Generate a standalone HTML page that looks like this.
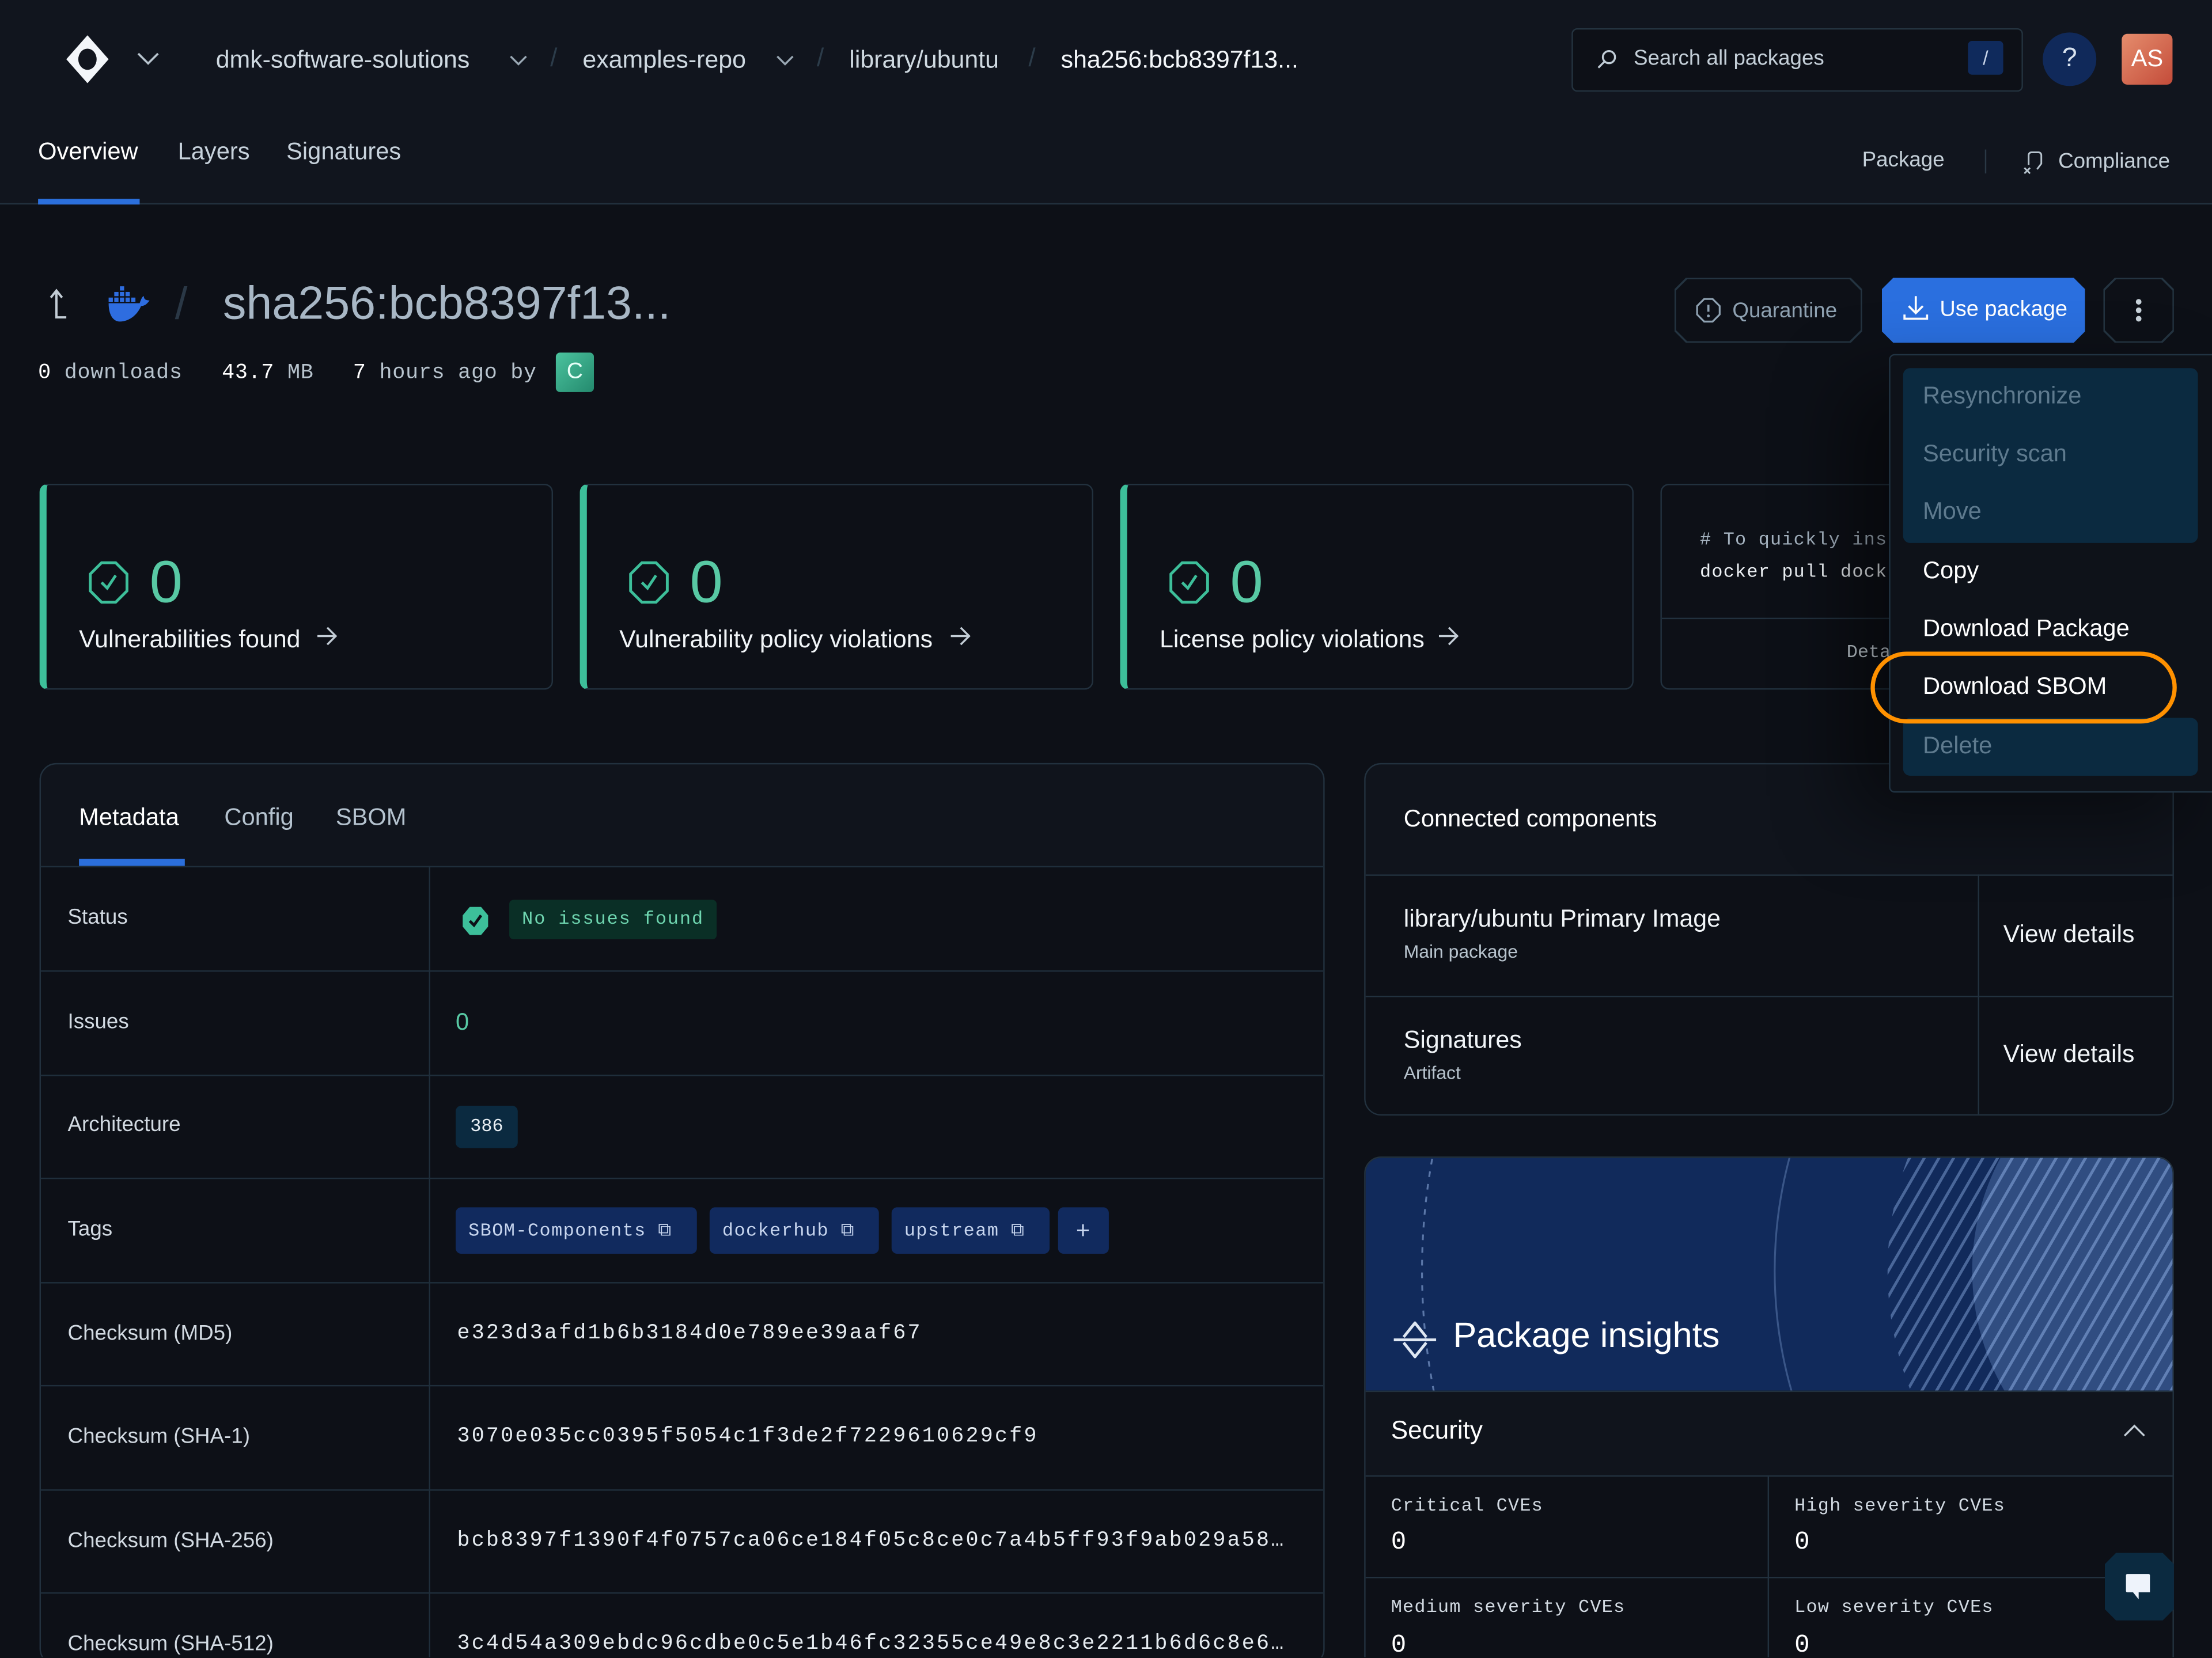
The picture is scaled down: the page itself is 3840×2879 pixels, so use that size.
<!DOCTYPE html>
<html><head><meta charset="utf-8"><style>
*{margin:0;padding:0;box-sizing:border-box}
html,body{width:3840px;height:2879px;overflow:hidden;background:#0d1017}
#w{position:absolute;left:0;top:0;width:1568px;height:1175px;transform:scale(2.449);transform-origin:0 0;font-family:"Liberation Sans",sans-serif;color:#e8edf2;background:#0d1017;overflow:hidden}
.a{position:absolute;white-space:nowrap}
.m{font-family:"Liberation Mono",monospace}
.oct{clip-path:polygon(8px 0,calc(100% - 8px) 0,100% 8px,100% calc(100% - 8px),calc(100% - 8px) 100%,8px 100%,0 calc(100% - 8px),0 8px)}
.row{position:absolute;left:0;right:0;border-top:1px solid #1f2e3b}
.lab{position:absolute;left:19px;font-size:15px;color:#d2dae2}
.val{position:absolute;left:295px;font-size:15px;letter-spacing:1.3px;color:#e6ecf1}
.tag{position:absolute;top:-16px;height:33px;background:#112a5e;border-radius:4px;color:#c8d6ef;font-size:13px;letter-spacing:.6px;line-height:33px;padding-left:9px}
</style></head><body><div id="w">
<!-- header -->
<div class="a" style="left:0;top:0;width:1568px;height:145px;background:#11151e;border-bottom:1px solid #23323f"></div>
<svg class="a" style="left:44px;top:24px" width="36" height="36" viewBox="0 0 36 36"><path d="M18 1 L33 18 L18 35 L3 18Z" fill="#f3f6fa"/><ellipse cx="18" cy="18" rx="6.5" ry="7.5" fill="#11151e"/></svg>
<svg class="a" style="left:97px;top:37px" width="16" height="10"><path d="M1 1l7 7 7-7" stroke="#b8c4ce" stroke-width="1.5" fill="none"/></svg>
<div class="a" style="left:153px;top:32px;font-size:17.5px;color:#cfd9e1">dmk-software-solutions</div>
<svg class="a" style="left:361px;top:39px" width="13" height="8"><path d="M1 1l5.5 5.5 5.5-5.5" stroke="#9aa8b4" stroke-width="1.4" fill="none"/></svg>
<div class="a" style="left:390px;top:31px;font-size:18px;color:#2c3c4a">/</div>
<div class="a" style="left:413px;top:32px;font-size:17.5px;color:#cfd9e1">examples-repo</div>
<svg class="a" style="left:550px;top:39px" width="13" height="8"><path d="M1 1l5.5 5.5 5.5-5.5" stroke="#9aa8b4" stroke-width="1.4" fill="none"/></svg>
<div class="a" style="left:579px;top:31px;font-size:18px;color:#2c3c4a">/</div>
<div class="a" style="left:602px;top:32px;font-size:17.5px;color:#cfd9e1">library/ubuntu</div>
<div class="a" style="left:729px;top:31px;font-size:18px;color:#2c3c4a">/</div>
<div class="a" style="left:752px;top:32px;font-size:17.5px;color:#f4f7fa">sha256:bcb8397f13...</div>
<div class="a" style="left:1114px;top:20px;width:320px;height:45px;border:1px solid #24333f;border-radius:4px;background:#0d1017"></div>
<svg class="a" style="left:1131px;top:34px" width="16" height="16"><circle cx="9.5" cy="6.5" r="4.3" stroke="#c0ccd6" stroke-width="1.4" fill="none"/><path d="M6.5 9.5L2 14" stroke="#c0ccd6" stroke-width="1.4"/></svg>
<div class="a" style="left:1158px;top:33px;font-size:15px;color:#c4cfd8">Search all packages</div>
<div class="a" style="left:1395px;top:29px;width:25px;height:24px;background:#0f2a5c;border-radius:3px;color:#c6d3e8;font-size:14px;text-align:center;line-height:24px">/</div>
<div class="a" style="left:1448px;top:23px;width:38px;height:38px;border-radius:50%;background:#10295a;color:#d8e2ee;font-size:19px;text-align:center;line-height:38px">?</div>
<div class="a" style="left:1504px;top:24px;width:36px;height:36px;border-radius:4px;background:linear-gradient(135deg,#e58d6d,#c44c3a);color:#fff;font-size:17px;text-align:center;line-height:36px">AS</div>
<div class="a" style="left:27px;top:98px;font-size:17px;color:#fff">Overview</div>
<div class="a" style="left:27px;top:141px;width:72px;height:4px;background:#2b6fdc"></div>
<div class="a" style="left:126px;top:98px;font-size:17px;color:#c7d2dc">Layers</div>
<div class="a" style="left:203px;top:98px;font-size:17px;color:#c7d2dc">Signatures</div>
<div class="a" style="left:1320px;top:105px;font-size:15px;color:#c4cfd8">Package</div>
<div class="a" style="left:1407px;top:106px;width:1px;height:17px;background:#2a3845"></div>
<svg class="a" style="left:1434px;top:106px" width="16" height="18"><path d="M4 11V4a2 2 0 0 1 2-2h5a2 2 0 0 1 2 2v6l-3 4M1 13l4 4M5 13l-4 4" stroke="#b8c4ce" stroke-width="1.2" fill="none"/></svg>
<div class="a" style="left:1459px;top:106px;font-size:15px;color:#c4cfd8">Compliance</div>
<!-- title -->
<svg class="a" style="left:32px;top:204px" width="18" height="24"><path d="M4 7l4-5 4 5M8 2v19h7" stroke="#c3cdd6" stroke-width="1.6" fill="none"/></svg>
<svg class="a" style="left:76px;top:202px" width="32" height="28" viewBox="0 0 32 28"><g fill="#2e6de0"><rect x="9" y="1" width="3" height="3"/><rect x="5" y="5" width="3" height="3"/><rect x="9" y="5" width="3" height="3"/><rect x="13" y="5" width="3" height="3"/><rect x="1" y="9" width="3" height="3"/><rect x="5" y="9" width="3" height="3"/><rect x="9" y="9" width="3" height="3"/><rect x="13" y="9" width="3" height="3"/><rect x="17" y="9" width="3" height="3"/><path d="M1 13h22c1-3 2-5 3-5 0 2 1 3 4 3-2 3-4 4-6 4-3 7-9 11-15 11-5 0-8-5-8-13z"/></g></svg>
<div class="a" style="left:124px;top:197px;font-size:32px;color:#2a3846">/</div>
<div class="a" style="left:158px;top:196px;font-size:33px;color:#a8b7c5">sha256:bcb8397f13...</div>
<div class="a m" style="left:27px;top:256px;font-size:15px;color:#b8c4ce;letter-spacing:.3px"><span style="color:#fff">0</span> downloads &nbsp;&nbsp;<span style="color:#fff">43.7</span> MB &nbsp;&nbsp;<span style="color:#fff">7</span> hours ago by</div>
<div class="a" style="left:394px;top:250px;width:27px;height:28px;border-radius:3px;background:linear-gradient(135deg,#4bc39e,#248a6e);color:#e6fff7;font-size:16px;text-align:center;line-height:28px">C</div>
<!-- buttons -->
<div class="a oct" style="left:1187px;top:197px;width:133px;height:46px;background:#243441"><div class="oct" style="position:absolute;left:1px;top:1px;right:1px;bottom:1px;background:#0d1017"></div></div>
<svg class="a" style="left:1202px;top:211px" width="18" height="18"><path d="M6 1h6l5 5v6l-5 5H6l-5-5V6z" stroke="#8fa2b2" stroke-width="1.3" fill="none"/><path d="M9 5v5" stroke="#8fa2b2" stroke-width="1.5"/><circle cx="9" cy="13" r="1" fill="#8fa2b2"/></svg>
<div class="a" style="left:1228px;top:212px;font-size:15px;color:#8fa2b2">Quarantine</div>
<div class="a oct" style="left:1334px;top:197px;width:144px;height:46px;background:#2a6fdf"></div>
<svg class="a" style="left:1349px;top:209px" width="18" height="19"><path d="M9 1v12M4 8l5 5 5-5M1 14v3h16v-3" stroke="#fff" stroke-width="1.5" fill="none"/></svg>
<div class="a" style="left:1375px;top:211px;font-size:15.5px;color:#fff">Use package</div>
<div class="a oct" style="left:1491px;top:197px;width:50px;height:46px;background:#243441"><div class="oct" style="position:absolute;left:1px;top:1px;right:1px;bottom:1px;background:#0d1017"></div></div>
<div class="a" style="left:1514px;top:212px;width:4px;height:4px;border-radius:50%;background:#c8d2da;box-shadow:0 6px 0 #c8d2da,0 12px 0 #c8d2da"></div>
<!-- cards -->
<div class="a" style="left:28px;top:343px;width:364px;height:146px;border:1px solid #22313e;border-left:5px solid #3dbf9a;border-radius:6px"></div>
<div class="a" style="left:411px;top:343px;width:364px;height:146px;border:1px solid #22313e;border-left:5px solid #3dbf9a;border-radius:6px"></div>
<div class="a" style="left:794px;top:343px;width:364px;height:146px;border:1px solid #22313e;border-left:5px solid #3dbf9a;border-radius:6px"></div>
<svg class="a" style="left:61px;top:397px" width="32" height="32" viewBox="0 0 32 32"><path d="M11 2h10l8 8v12l-8 8H11l-8-8V10z" stroke="#3dbf9a" stroke-width="2" fill="none"/><path d="M11 16l4 4 6-9" stroke="#3dbf9a" stroke-width="2" fill="none"/></svg>
<div class="a" style="left:106px;top:389px;font-size:42px;color:#58c9a4">0</div>
<div class="a" style="left:56px;top:443px;font-size:17.5px;color:#f1f5f8">Vulnerabilities found</div>
<svg class="a" style="left:224px;top:444px" width="16" height="14"><path d="M1 7h13M8 1l6 6-6 6" stroke="#c3cdd6" stroke-width="1.4" fill="none"/></svg>
<svg class="a" style="left:444px;top:397px" width="32" height="32" viewBox="0 0 32 32"><path d="M11 2h10l8 8v12l-8 8H11l-8-8V10z" stroke="#3dbf9a" stroke-width="2" fill="none"/><path d="M11 16l4 4 6-9" stroke="#3dbf9a" stroke-width="2" fill="none"/></svg>
<div class="a" style="left:489px;top:389px;font-size:42px;color:#58c9a4">0</div>
<div class="a" style="left:439px;top:443px;font-size:17.5px;color:#f1f5f8">Vulnerability policy violations</div>
<svg class="a" style="left:673px;top:444px" width="16" height="14"><path d="M1 7h13M8 1l6 6-6 6" stroke="#c3cdd6" stroke-width="1.4" fill="none"/></svg>
<svg class="a" style="left:827px;top:397px" width="32" height="32" viewBox="0 0 32 32"><path d="M11 2h10l8 8v12l-8 8H11l-8-8V10z" stroke="#3dbf9a" stroke-width="2" fill="none"/><path d="M11 16l4 4 6-9" stroke="#3dbf9a" stroke-width="2" fill="none"/></svg>
<div class="a" style="left:872px;top:389px;font-size:42px;color:#58c9a4">0</div>
<div class="a" style="left:822px;top:443px;font-size:17.5px;color:#f1f5f8">License policy violations</div>
<svg class="a" style="left:1019px;top:444px" width="16" height="14"><path d="M1 7h13M8 1l6 6-6 6" stroke="#c3cdd6" stroke-width="1.4" fill="none"/></svg>
<div class="a" style="left:1177px;top:343px;width:364px;height:146px;border:1px solid #22313e;border-radius:6px;overflow:hidden">
 <div class="a m" style="left:27px;top:31px;font-size:13px;color:#a5b3c0;letter-spacing:.5px"># To quickly ins</div>
 <div class="a m" style="left:27px;top:54px;font-size:13px;color:#eef2f6;letter-spacing:.5px">docker pull dock</div>
 <div class="a" style="left:0;right:0;top:94px;border-top:1px solid #22313e"></div>
 <div class="a m" style="left:131px;top:111px;font-size:13px;color:#c8d2da">Deta</div>
</div>
<!-- metadata -->
<div class="a" style="left:28px;top:541px;width:911px;height:640px;border:1px solid #22313e;border-radius:12px;background:#10141c;overflow:hidden">
 <div class="a" style="left:27px;top:28px;font-size:17px;color:#fff">Metadata</div>
 <div class="a" style="left:130px;top:28px;font-size:17px;color:#b5c3cf">Config</div>
 <div class="a" style="left:209px;top:28px;font-size:17px;color:#b5c3cf">SBOM</div>
 <div class="a" style="left:27px;top:67px;width:75px;height:5px;background:#2b6fdc"></div>
 <div class="a" style="left:0;top:72px;width:909px;height:640px;background:#0d1017"></div>
 <div class="a" style="left:275px;top:72px;width:1px;height:640px;background:#1f2e3b"></div>
 <div class="row" style="top:72px"><div class="lab" style="top:27px">Status</div>
  <svg class="a" style="left:298px;top:27px" width="20" height="22"><path d="M6 1h8l5 6v8l-5 6H6l-5-6V7z" fill="#3dbf9a"/><path d="M6 11l3 3 5-7" stroke="#0d1017" stroke-width="2" fill="none"/></svg>
  <div class="a m" style="left:332px;top:23px;height:28px;padding:0 9px;background:#0a2f26;border-radius:3px;color:#6fd6b0;font-size:13px;letter-spacing:.8px;line-height:28px">No issues found</div></div>
 <div class="row" style="top:146px"><div class="lab" style="top:27px">Issues</div><div class="a" style="left:294px;top:26px;font-size:17px;color:#58c9a4">0</div></div>
 <div class="row" style="top:220px"><div class="lab" style="top:26px">Architecture</div><div class="a m" style="left:294px;top:21px;height:30px;width:44px;background:#0b2a40;border-radius:4px;color:#e8eef3;font-size:13px;text-align:center;line-height:30px">386</div></div>
 <div class="row" style="top:293px"><div class="lab" style="top:27px">Tags</div>
  <div class="tag m" style="left:294px;top:20px;width:171px">SBOM-Components ⧉</div>
  <div class="tag m" style="left:474px;top:20px;width:120px">dockerhub ⧉</div>
  <div class="tag m" style="left:603px;top:20px;width:112px">upstream ⧉</div>
  <div class="tag" style="left:721px;top:20px;width:36px;padding:0;text-align:center;font-size:17px">+</div></div>
 <div class="row" style="top:367px"><div class="lab" style="top:27px">Checksum (MD5)</div><div class="val m" style="top:27px">e323d3afd1b6b3184d0e789ee39aaf67</div></div>
 <div class="row" style="top:440px"><div class="lab" style="top:27px">Checksum (SHA-1)</div><div class="val m" style="top:27px">3070e035cc0395f5054c1f3de2f7229610629cf9</div></div>
 <div class="row" style="top:514px"><div class="lab" style="top:27px">Checksum (SHA-256)</div><div class="val m" style="top:27px">bcb8397f1390f4f0757ca06ce184f05c8ce0c7a4b5ff93f9ab029a58…</div></div>
 <div class="row" style="top:587px"><div class="lab" style="top:27px">Checksum (SHA-512)</div><div class="val m" style="top:27px">3c4d54a309ebdc96cdbe0c5e1b46fc32355ce49e8c3e2211b6d6c8e6…</div></div>
</div>
<!-- connected components -->
<div class="a" style="left:967px;top:541px;width:574px;height:250px;border:1px solid #22313e;border-radius:12px;background:#10141c;overflow:hidden">
 <div class="a" style="left:27px;top:29px;font-size:17px;color:#fff">Connected components</div>
 <div class="a" style="left:0;top:78px;width:574px;height:180px;background:#0d1017;border-top:1px solid #22313e"></div>
 <div class="a" style="left:0;top:164px;width:574px;border-top:1px solid #22313e"></div>
 <div class="a" style="left:434px;top:78px;width:1px;height:180px;background:#22313e"></div>
 <div class="a" style="left:27px;top:99px;font-size:17.5px;color:#f1f5f8">library/ubuntu Primary Image</div>
 <div class="a" style="left:27px;top:125px;font-size:13px;color:#b8c4ce">Main package</div>
 <div class="a" style="left:452px;top:110px;font-size:17.5px;color:#f1f5f8">View details</div>
 <div class="a" style="left:27px;top:185px;font-size:17.5px;color:#f1f5f8">Signatures</div>
 <div class="a" style="left:27px;top:211px;font-size:13px;color:#b8c4ce">Artifact</div>
 <div class="a" style="left:452px;top:195px;font-size:17.5px;color:#f1f5f8">View details</div>
</div>
<!-- insights -->
<div class="a" style="left:967px;top:820px;width:574px;height:380px;border:1px solid #22313e;border-radius:12px;background:#0d1017;overflow:hidden">
 <div class="a" style="left:0;top:0;width:574px;height:165px;background:#112a5b;overflow:hidden">
  <svg class="a" style="left:0;top:0" width="574" height="165">
   <defs><pattern id="p" width="9" height="9" patternUnits="userSpaceOnUse" patternTransform="rotate(30)"><rect width="2" height="9" fill="#6f8fc4" opacity=".6"/></pattern></defs>
   <circle cx="660" cy="80" r="440" fill="none" stroke="#5b77a8" stroke-width="1.3" stroke-dasharray="4 5" transform="translate(-180 0)"/>
   <circle cx="600" cy="80" r="310" fill="none" stroke="#3a5688" stroke-width="1.3"/>
   <circle cx="600" cy="80" r="230" fill="url(#p)"/>
   <circle cx="600" cy="80" r="170" fill="#4a6aa0" opacity=".55"/>
   <circle cx="600" cy="80" r="170" fill="url(#p)"/>
  </svg>
  <svg class="a" style="left:19px;top:116px" width="32" height="26"><path d="M8 11l8-10 8 10M1 13h30M8 15l8 10 8-10" stroke="#dfe7f2" stroke-width="2" fill="none"/></svg>
  <div class="a" style="left:62px;top:112px;font-size:25px;color:#fff">Package insights</div>
 </div>
 <div class="a" style="left:0;top:165px;width:574px;height:61px;background:#10141c;border-top:1px solid #22313e;border-bottom:1px solid #22313e"></div>
 <div class="a" style="left:18px;top:183px;font-size:18px;color:#fff">Security</div>
 <svg class="a" style="left:537px;top:188px" width="16" height="10"><path d="M1 9l7-7 7 7" stroke="#c3cdd6" stroke-width="1.4" fill="none"/></svg>
 <div class="a" style="left:285px;top:226px;width:1px;height:160px;background:#22313e"></div>
 <div class="a" style="left:0;top:297px;width:574px;border-top:1px solid #22313e"></div>
 <div class="a m" style="left:18px;top:239px;font-size:13px;color:#d2dae2;letter-spacing:.5px">Critical CVEs</div>
 <div class="a m" style="left:18px;top:263px;font-size:18px;color:#fff">0</div>
 <div class="a m" style="left:304px;top:239px;font-size:13px;color:#d2dae2;letter-spacing:.5px">High severity CVEs</div>
 <div class="a m" style="left:304px;top:263px;font-size:18px;color:#fff">0</div>
 <div class="a m" style="left:18px;top:311px;font-size:13px;color:#d2dae2;letter-spacing:.5px">Medium severity CVEs</div>
 <div class="a m" style="left:18px;top:336px;font-size:18px;color:#fff">0</div>
 <div class="a m" style="left:304px;top:311px;font-size:13px;color:#d2dae2;letter-spacing:.5px">Low severity CVEs</div>
 <div class="a m" style="left:304px;top:336px;font-size:18px;color:#fff">0</div>
</div>
<div class="a oct" style="left:1492px;top:1101px;width:49px;height:48px;background:#0b2a40"></div>
<svg class="a" style="left:1506px;top:1115px" width="20" height="20"><path d="M2 1h15a1 1 0 0 1 1 1v12H10v5L6 14H2a1 1 0 0 1-1-1V2a1 1 0 0 1 1-1z" fill="#eef3fb"/></svg>
<!-- dropdown menu -->
<div class="a" style="left:1339px;top:251px;width:235px;height:311px;background:#0e1219;border:1px solid #213342;border-radius:4px;box-shadow:-30px 20px 60px rgba(0,0,0,.45)">
 <div class="a" style="left:9px;top:9px;width:209px;height:124px;background:#0b2a40;border-radius:5px"></div>
 <div class="a" style="left:9px;top:257px;width:209px;height:41px;background:#0b2a40;border-radius:5px"></div>
 <div class="a" style="left:23px;top:19px;font-size:17px;color:#5e7a8e">Resynchronize</div>
 <div class="a" style="left:23px;top:60px;font-size:17px;color:#5e7a8e">Security scan</div>
 <div class="a" style="left:23px;top:101px;font-size:17px;color:#5e7a8e">Move</div>
 <div class="a" style="left:23px;top:143px;font-size:17px;color:#fff">Copy</div>
 <div class="a" style="left:23px;top:184px;font-size:17px;color:#fff">Download Package</div>
 <div class="a" style="left:23px;top:225px;font-size:17px;color:#fff">Download SBOM</div>
 <div class="a" style="left:23px;top:267px;font-size:17px;color:#5e7a8e">Delete</div>
</div>
<div class="a" style="left:1326px;top:462px;width:217px;height:51px;border:3px solid #ff9100;border-radius:26px"></div>
</div></body></html>
